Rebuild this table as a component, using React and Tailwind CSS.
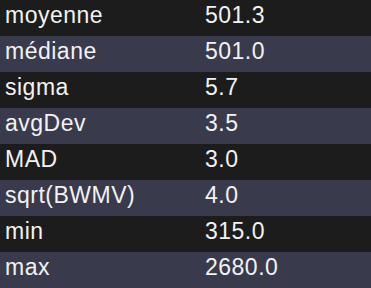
export default function App() {
  const rows = [
    ["moyenne", "501.3"],
    ["médiane", "501.0"],
    ["sigma", "5.7"],
    ["avgDev", "3.5"],
    ["MAD", "3.0"],
    ["sqrt(BWMV)", "4.0"],
    ["min", "315.0"],
    ["max", "2680.0"],
  ];
  return (
    <div className="w-[371px] h-[288px] bg-[#1c1c1c] text-[#f2f2f2] text-[23px] leading-none tracking-[0.5px]" style={{ fontFamily: '"Liberation Sans", Arial, sans-serif' }}>
      {rows.map(([k, v], i) => (
        <div key={k} className={`flex items-start pt-[4px] h-[36px] ${i % 2 === 1 ? "bg-[#393b4c]" : "bg-[#1c1c1c]"}`}>
          <div className="w-[205px] pl-[5px]">{k}</div>
          <div>{v}</div>
        </div>
      ))}
    </div>
  );
}
